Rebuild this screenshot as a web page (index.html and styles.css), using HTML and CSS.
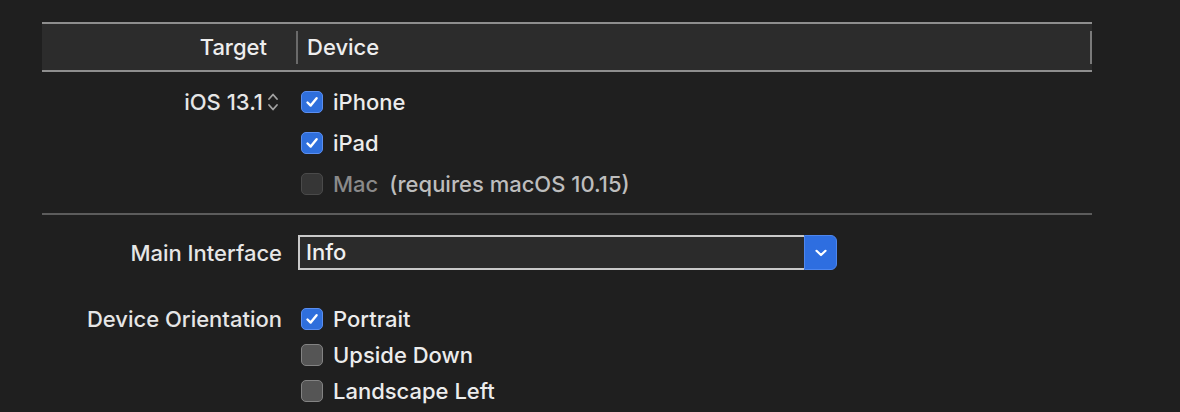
FILE: index.html
```html
<!DOCTYPE html>
<html>
<head>
<meta charset="utf-8">
<link rel="stylesheet" href="styles.css">
</head>
<body>
<div class="page">
  <div class="table-header">
    <div class="th th-target">Target</div>
    <div class="th-divider"></div>
    <div class="th th-device">Device</div>
    <div class="th-end"></div>
  </div>

  <div class="form form-target">
    <div class="label label-check">
      <span>iOS 13.1</span>
      <svg class="stepper" width="12" height="20" viewBox="0 0 12 20">
        <path d="M2 7 L6 2.5 L10 7" fill="none" stroke="#a3a3a3" stroke-width="1.8" stroke-linecap="round" stroke-linejoin="round"/>
        <path d="M2 13 L6 17.5 L10 13" fill="none" stroke="#a3a3a3" stroke-width="1.8" stroke-linecap="round" stroke-linejoin="round"/>
      </svg>
    </div>
    <div class="checks checks-wide">
      <div class="check-item">
        <span class="box box-on"><svg width="16" height="16" viewBox="0 0 16 16"><path d="M3.5 8.5 L6.7 11.6 L12.6 4.2" fill="none" stroke="#fff" stroke-width="2.4" stroke-linecap="round" stroke-linejoin="round"/></svg></span>
        <span class="check-text">iPhone</span>
      </div>
      <div class="check-item">
        <span class="box box-on"><svg width="16" height="16" viewBox="0 0 16 16"><path d="M3.5 8.5 L6.7 11.6 L12.6 4.2" fill="none" stroke="#fff" stroke-width="2.4" stroke-linecap="round" stroke-linejoin="round"/></svg></span>
        <span class="check-text">iPad</span>
      </div>
      <div class="check-item">
        <span class="box box-disabled"></span>
        <span class="check-text text-disabled">Mac</span>
        <span class="check-note">(requires macOS 10.15)</span>
      </div>
    </div>
  </div>

  <div class="separator"></div>

  <div class="form form-interface">
    <div class="label label-popup">Main Interface</div>
    <div class="popup">
      <div class="popup-field">Info</div>
      <div class="popup-button">
        <svg width="14" height="10" viewBox="0 0 14 10"><path d="M2.5 2.8 L7 7 L11.5 2.8" fill="none" stroke="#fff" stroke-width="2.2" stroke-linecap="round" stroke-linejoin="round"/></svg>
      </div>
    </div>

    <div class="label label-check label-orient">Device Orientation</div>
    <div class="checks checks-tight orient">
      <div class="check-item">
        <span class="box box-on"><svg width="16" height="16" viewBox="0 0 16 16"><path d="M3.5 8.5 L6.7 11.6 L12.6 4.2" fill="none" stroke="#fff" stroke-width="2.4" stroke-linecap="round" stroke-linejoin="round"/></svg></span>
        <span class="check-text">Portrait</span>
      </div>
      <div class="check-item">
        <span class="box box-off"></span>
        <span class="check-text">Upside Down</span>
      </div>
      <div class="check-item">
        <span class="box box-off"></span>
        <span class="check-text">Landscape Left</span>
      </div>
    </div>
  </div>
</div>
</body>
</html>
```

FILE: styles.css
```css
html, body {
  margin: 0;
  padding: 0;
  background: #1f1f1f;
  height: 100%;
  overflow: hidden;
}

body {
  font-family: "Inter", "Liberation Sans", sans-serif;
  font-size: 22px;
  font-weight: 500;
  color: #e8e8e8;
}

.page {
  padding-top: 22px;
}

.table-header {
  margin-left: 42px;
  width: 1050px;
  height: 46px;
  box-sizing: content-box;
  border-top: 2px solid #8e8e8e;
  border-bottom: 2px solid #8e8e8e;
  background: #2c2c2c;
  display: flex;
  align-items: center;
}

.th {
  color: #eeeeee;
  line-height: 46px;
}

.th-target {
  width: 254px;
  box-sizing: border-box;
  padding-right: 29px;
  text-align: right;
}

.th-divider {
  width: 2px;
  height: 33px;
  background: #6a6a6a;
}

.th-device {
  flex: 1;
  padding-left: 9px;
}

.th-end {
  width: 2px;
  height: 33px;
  background: #7a7a7a;
}

.form {
  display: grid;
  grid-template-columns: 282px 1fr;
  column-gap: 16px;
  align-items: start;
}

.form-target {
  padding-top: 19px;
}

.label {
  text-align: right;
  color: #e6e6e6;
  white-space: nowrap;
}

.label-check {
  line-height: 22px;
  height: 22px;
  display: flex;
  justify-content: flex-end;
  align-items: center;
}

.label-check .stepper {
  margin-left: 4px;
  margin-right: 3px;
}

.label-popup {
  line-height: 36px;
}

.label-orient {
  margin-top: 37px;
}

.checks {
  display: flex;
  flex-direction: column;
  padding-left: 3px;
}

.checks-wide {
  gap: 19px;
}

.checks-tight {
  gap: 14px;
}

.orient {
  margin-top: 37px;
}

.check-item {
  display: flex;
  align-items: center;
  height: 22px;
  white-space: nowrap;
}

.box {
  width: 22px;
  height: 22px;
  box-sizing: border-box;
  border-radius: 5px;
  display: flex;
  align-items: center;
  justify-content: center;
  flex: none;
  margin-right: 10px;
}

.box-on {
  background: #2f6fdc;
  border: 1px solid #5a8ef0;
}

.box-off {
  background: #555555;
  border: 1px solid #838383;
}

.box-disabled {
  background: #363636;
  border: 1px solid #4a4a4a;
}

.check-text {
  color: #ececec;
}

.text-disabled {
  color: #8a8a8a;
}

.check-note {
  color: #bdbdbd;
  margin-left: 11px;
}

.separator {
  margin-top: 18px;
  margin-left: 42px;
  width: 1050px;
  height: 2px;
  background: #5c5c5c;
}

.form-interface {
  padding-top: 20px;
}

.popup {
  display: flex;
  width: 539px;
  height: 35px;
}

.popup-field {
  flex: 1;
  box-sizing: border-box;
  border: 2px solid #c9c9c9;
  border-right: none;
  background: #2b2b2b;
  color: #f0f0f0;
  padding-left: 6px;
  line-height: 31px;
}

.popup-button {
  width: 33px;
  background: #2e6ee0;
  border: 1px solid #4d86ee;
  box-sizing: border-box;
  border-radius: 0 6px 6px 0;
  display: flex;
  align-items: center;
  justify-content: center;
}
```
